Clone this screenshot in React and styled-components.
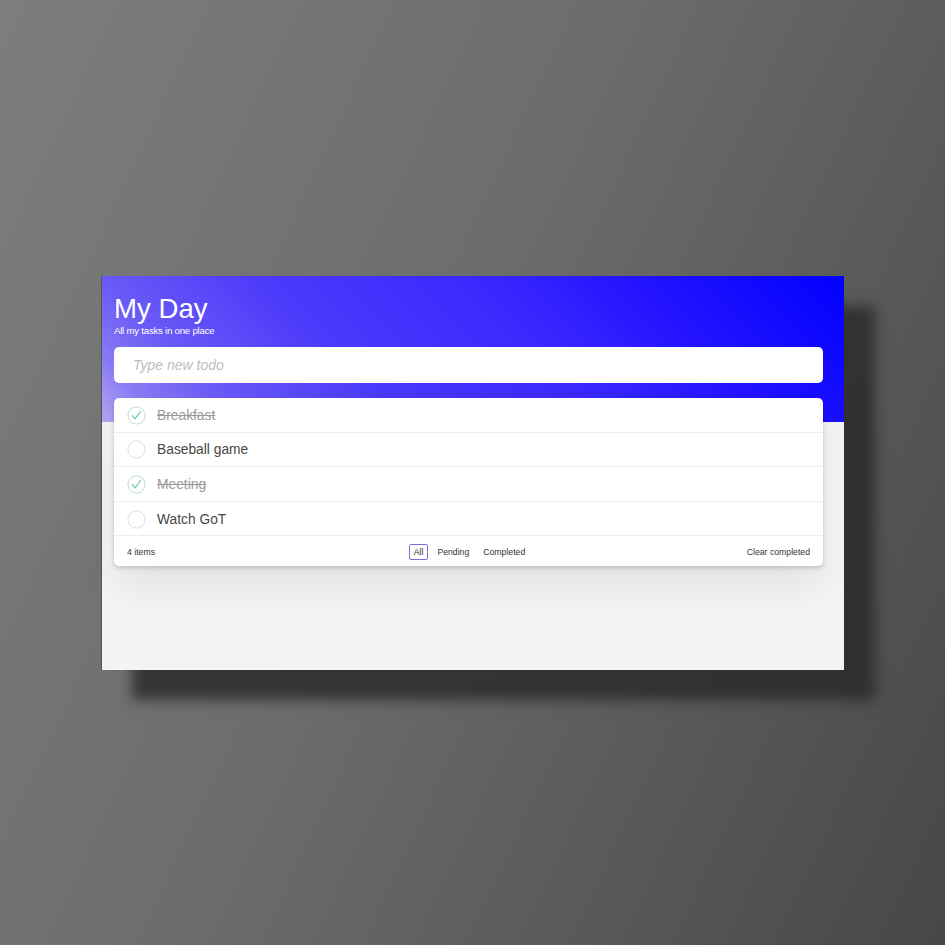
import React from 'react';
import styled, { createGlobalStyle } from 'styled-components';

const GlobalStyle = createGlobalStyle`
  html, body {
    margin: 0;
    padding: 0;
  }
  body {
    font-family: "Liberation Sans", Arial, sans-serif;
    background: linear-gradient(115deg, #7d7d7d 0%, #6c6c6c 45%, #474747 100%);
    min-height: 100vh;
  }
`;

const Stage = styled.div`
  width: 945px;
  height: 945px;
  box-sizing: border-box;
  padding-left: 101px;
  display: flex;
  align-items: center;
`;

const Window = styled.div`
  width: 743px;
  height: 394px;
  box-sizing: border-box;
  padding: 17px 21px 0 12px;
  background:
    linear-gradient(45deg, #b4a8f0 0%, #8a7cf4 7%, #6a5af6 16%, #4c3afb 34%, #3826ff 60%, #2414ff 75%, #0000ff 100%) top / 100% 146px no-repeat,
    #f4f4f4;
  box-shadow: 31px 30px 12px rgba(40, 40, 40, 0.8);
  border-left: 1px solid #555;
`;

const Title = styled.h1`
  margin: 0;
  font-size: 27.6px;
  font-weight: 400;
  line-height: 32px;
  color: #fff;
`;

const Subtitle = styled.p`
  margin: 0;
  font-size: 9.7px;
  line-height: 11.5px;
  color: #fff;
  letter-spacing: -0.25px;
`;

const NewTodo = styled.input`
  display: block;
  width: 100%;
  box-sizing: border-box;
  height: 36px;
  margin-top: 11px;
  padding: 0 19px;
  border: none;
  border-radius: 5px;
  background: #fff;
  font-family: inherit;
  font-size: 14px;
  color: #4d4d4d;
  outline: none;

  &::placeholder {
    font-style: italic;
    color: #bdbdbd;
  }
`;

const ListCard = styled.div`
  margin-top: 15px;
  background: #fff;
  border-radius: 5px;
  box-shadow: 0 2px 4px rgba(0, 0, 0, 0.18), 0 22px 40px rgba(0, 0, 0, 0.07);
  overflow: hidden;
`;

const Row = styled.div`
  display: flex;
  align-items: center;
  gap: 11px;
  height: 34.6px;
  padding: 1px 13px 0;
  border-bottom: 1px solid #ededed;
  box-sizing: border-box;
`;

const Label = styled.span`
  font-size: 13.8px;
  color: ${({ $done }) => ($done ? '#9a9a9a' : '#474747')};
  text-decoration: ${({ $done }) => ($done ? 'line-through' : 'none')};
`;

const Footer = styled.div`
  display: grid;
  grid-template-columns: 1fr auto 1fr;
  align-items: center;
  height: 29px;
  padding: 1px 13px 0;
  font-size: 8.7px;
  color: #333;
`;

const Count = styled.span``;

const Filters = styled.div`
  display: flex;
  gap: 4px;
  margin-left: 2px;
`;

const Filter = styled.span`
  padding: 2px 4px;
  border-radius: 2px;
  border: 1px solid ${({ $active }) => ($active ? '#7d6fd6' : 'transparent')};
`;

const Clear = styled.span`
  justify-self: end;
`;

const Check = ({ done }) => (
  <svg width="19" height="19" viewBox="0 0 19 19">
    <circle cx="9.5" cy="9.5" r="8.6" fill="none" stroke={done ? '#bddad5' : '#dcdcdc'} strokeWidth="1" />
    {done && (
      <path d="M5.3 9.6 L8.2 12.8 L13.6 5.2" fill="none" stroke="#5dc2af" strokeWidth="1.1" strokeLinecap="round" strokeLinejoin="round" />
    )}
  </svg>
);

const todos = [
  { text: 'Breakfast', done: true },
  { text: 'Baseball game', done: false },
  { text: 'Meeting', done: true },
  { text: 'Watch GoT', done: false },
];

export default function App() {
  return (
    <>
      <GlobalStyle />
      <Stage>
        <Window>
          <Title>My Day</Title>
          <Subtitle>All my tasks in one place</Subtitle>
          <NewTodo placeholder="Type new todo" />
          <ListCard>
            {todos.map((t) => (
              <Row key={t.text}>
                <Check done={t.done} />
                <Label $done={t.done}>{t.text}</Label>
              </Row>
            ))}
            <Footer>
              <Count>4 items</Count>
              <Filters>
                <Filter $active>All</Filter>
                <Filter>Pending</Filter>
                <Filter>Completed</Filter>
              </Filters>
              <Clear>Clear completed</Clear>
            </Footer>
          </ListCard>
        </Window>
      </Stage>
    </>
  );
}
